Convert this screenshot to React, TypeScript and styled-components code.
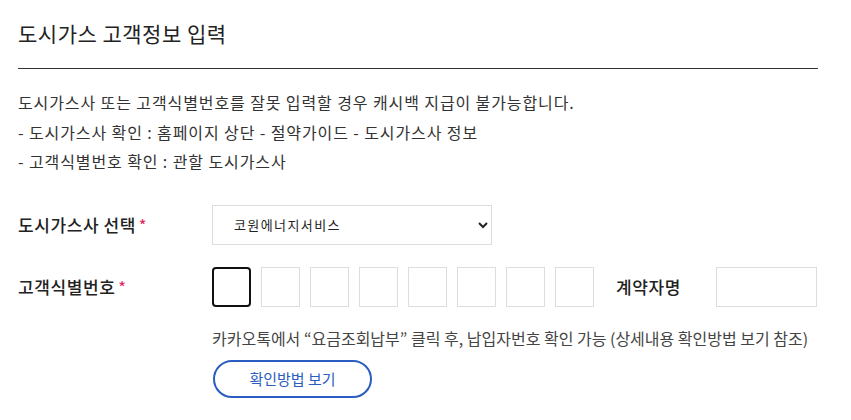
import React from "react";
import styled, { createGlobalStyle } from "styled-components";

const Global = createGlobalStyle`
  html, body { margin: 0; padding: 0; background: #fff; }
  body { font-family: "Noto Sans CJK KR", "Noto Sans", sans-serif; color: #333; }
  * { box-sizing: border-box; }
`;

const Page = styled.div`
  width: 800px;
  margin-left: 18px;
`;

const Title = styled.h2`
  margin: 0;
  padding-top: 18px;
  padding-bottom: 20px;
  font-size: 21px;
  letter-spacing: 0.5px;
  line-height: 30px;
  font-weight: 400;
  color: #222;
  border-bottom: 1px solid #333;
`;

const Notice = styled.div`
  margin-top: 19px;
  font-size: 16px;
  letter-spacing: 0.9px;
  line-height: 29.5px;
  color: #333;
`;

const Form = styled.div`
  margin-top: 28px;
  display: flex;
  flex-direction: column;
  gap: 22px;
`;

const Row = styled.div`
  display: flex;
  align-items: center;
`;

const Label = styled.div`
  width: 194px;
  font-size: 17px;
  letter-spacing: 0.6px;
  font-weight: 500;
  color: #222;
  display: flex;
  align-items: center;
`;

const Star = styled.span`
  color: #e5245c;
  margin-left: 3px;
  font-size: 15px;
`;

const Select = styled.select`
  width: 280px;
  height: 40px;
  border: 1px solid #ddd;
  background: #fff;
  padding: 0 17px;
  font-size: 13px;
  letter-spacing: 1.4px;
  color: #222;
  font-family: "Noto Sans CJK KR", sans-serif;
  outline: none;
`;

const Boxes = styled.div`
  display: flex;
  gap: 10px;
`;

const Box = styled.input<{ $active?: boolean }>`
  width: 39px;
  height: 40px;
  border: ${(p) => (p.$active ? "2px solid #111" : "1px solid #ddd")};
  border-radius: ${(p) => (p.$active ? "4px" : "0")};
  background: #fff;
  outline: none;
  padding: 0;
`;

const SubLabel = styled.div`
  margin-left: 22px;
  width: 100px;
  font-size: 17px;
  letter-spacing: 0.6px;
  font-weight: 500;
  color: #222;
`;

const NameInput = styled.input`
  width: 101px;
  height: 40px;
  border: 1px solid #ddd;
  outline: none;
`;

const Help = styled.div`
  margin-left: 194px;
  margin-top: -3px;
  font-size: 16px;
  line-height: 24px;
  color: #444;
`;

const PillButton = styled.button`
  margin-left: 195px;
  margin-top: 10px;
  width: 159px;
  height: 38px;
  border: 2px solid #2b5cbf;
  border-radius: 20px;
  background: #fff;
  color: #2b5cbf;
  font-size: 15px;
  font-family: "Noto Sans CJK KR", sans-serif;
  cursor: pointer;
`;

const HelpBlock = styled.div`
  display: flex;
  flex-direction: column;
  align-items: flex-start;
`;

export default function App() {
  return (
    <>
      <Global />
      <Page>
        <Title>도시가스 고객정보 입력</Title>
        <Notice>
          <div>도시가스사 또는 고객식별번호를 잘못 입력할 경우 캐시백 지급이 불가능합니다.</div>
          <div>- 도시가스사 확인 : 홈페이지 상단 - 절약가이드 - 도시가스사 정보</div>
          <div>- 고객식별번호 확인 : 관할 도시가스사</div>
        </Notice>
        <Form>
          <Row>
            <Label>
              도시가스사 선택<Star>*</Star>
            </Label>
            <Select defaultValue="kowon">
              <option value="kowon">코원에너지서비스</option>
            </Select>
          </Row>
          <Row>
            <Label>
              고객식별번호<Star>*</Star>
            </Label>
            <Boxes>
              {Array.from({ length: 8 }).map((_, i) => (
                <Box key={i} $active={i === 0} maxLength={1} />
              ))}
            </Boxes>
            <SubLabel>계약자명</SubLabel>
            <NameInput />
          </Row>
          <HelpBlock>
            <Help>카카오톡에서 “요금조회납부” 클릭 후, 납입자번호 확인 가능 (상세내용 확인방법 보기 참조)</Help>
            <PillButton>확인방법 보기</PillButton>
          </HelpBlock>
        </Form>
      </Page>
    </>
  );
}
